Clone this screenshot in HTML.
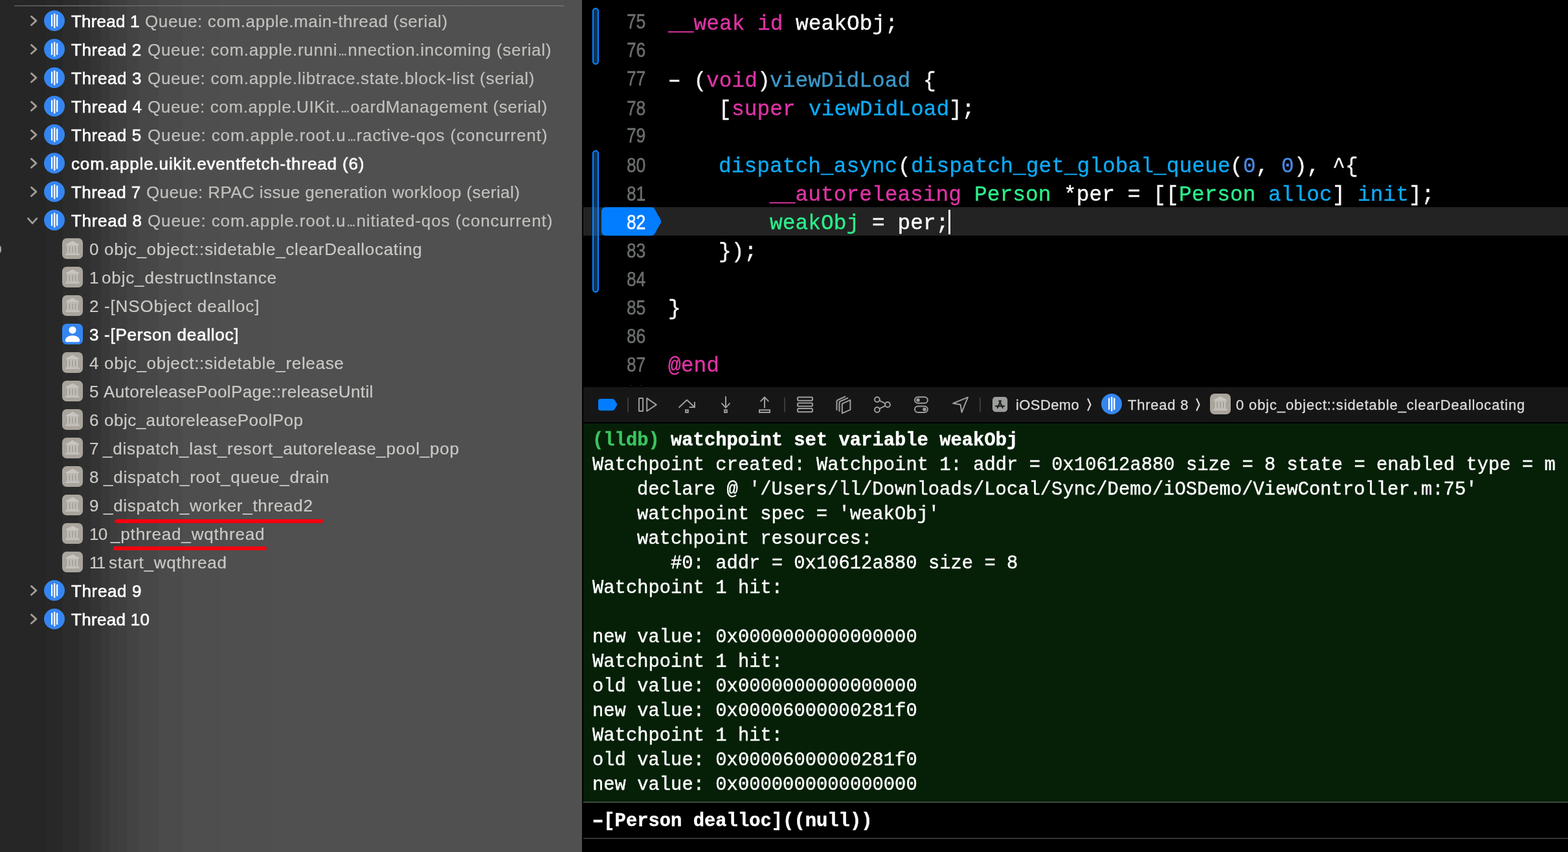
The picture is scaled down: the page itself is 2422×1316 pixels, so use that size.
<!DOCTYPE html>
<html lang="en">
<head>
<meta charset="utf-8">
<title>Xcode debug session</title>
<style>
html,body{margin:0;padding:0;background:#000;}
body{width:2422px;height:1316px;overflow:hidden;position:relative;font-family:"Liberation Sans",sans-serif;}
.left{position:absolute;left:0;top:0;width:899px;height:1316px;}
.topline{position:absolute;left:22px;top:8px;width:849px;height:2px;background:linear-gradient(90deg,#505050 0,#5e5e5e 12%,#696969 40%,#6b6b6b 100%);}
.ic{position:absolute;display:block;overflow:visible;}
.t{position:absolute;white-space:pre;line-height:60px;height:60px;transform-origin:0 50%;will-change:transform;font-family:"Liberation Sans",sans-serif;}
.m{font-family:"Liberation Mono",monospace;}
.el{display:inline-block;width:16px;letter-spacing:0;text-indent:3.5px;transform:scale(.5,.5);transform-origin:0 37px;-webkit-text-stroke:2px currentColor;}
.hy{display:inline-block;transform:scaleX(1.6);}
.red{position:absolute;height:6px;border-radius:3px;background:#f4000f;}
.editor{position:absolute;left:901px;top:0;width:1521px;height:598px;background:#000;}
.hl{position:absolute;left:901px;top:320px;width:1521px;height:44px;background:#232323;}
.pill{position:absolute;box-sizing:border-box;left:915px;width:10px;border:2px solid #0a84ff;border-radius:5px;background:#0a3562;}
.pillhl{position:absolute;left:917px;top:320px;width:6px;height:44px;background:#164b7e;}
.dbg{position:absolute;left:901px;top:598px;width:1521px;height:54px;background:#161616;}
.sep{position:absolute;top:613.5px;width:2px;height:23px;background:#3a3a3a;border-radius:1px;}
.con{position:absolute;left:901px;top:654px;width:1521px;height:584px;background:#062008;}
.conline{position:absolute;left:901px;top:1238px;width:1521px;height:2px;background:#3c4b3d;}
.botline{position:absolute;left:901px;top:1294px;width:1521px;height:2px;background:#343434;}
</style>
</head>
<body>
<section id="debug-navigator">
<div class="left" style="background:linear-gradient(90deg,#262626 0px,#262626 72px,#272827 72px,#272827 97px,#2b2c2b 97px,#2b2c2b 122px,#2f302f 122px,#2f302f 140px,#333433 140px,#333433 156px,#383938 156px,#383938 170px,#3c3d3c 170px,#3c3d3c 181px,#3f3f3f 181px,#3f3f3f 196px,#434343 196px,#434343 214px,#474747 214px,#474747 245px,#4b4b4b 245px,#4b4b4b 282px,#4e4e4e 282px,#4e4e4e 340px,#4f4f4f 340px,#4f4f4f 420px,#505050 420px)"></div>
<div class="topline"></div>
<svg class="ic" style="left:46.8px;top:23.6px" width="11" height="17" viewBox="0 0 11 17"><path d="M1.4 1.4 L8.9 8.1 L1.4 14.8" fill="none" stroke="#a39d96" stroke-width="2.8" stroke-linecap="round" stroke-linejoin="round"/></svg>
<svg class="ic" style="left:68px;top:16px" width="32" height="32" viewBox="0 0 32 32"><circle cx="16" cy="16" r="16" fill="#3585f1"/><rect x="11" y="6.5" width="2.2" height="18.6" rx="1" fill="#fff"/><rect x="15" y="4.8" width="2.4" height="22.6" rx="1" fill="#fff"/><rect x="19.1" y="6.5" width="2.2" height="18.6" rx="1" fill="#fff"/></svg>
<div class="t" style="left:110.00px;top:3px;font-size:26px;color:#ffffff;-webkit-text-stroke:0.6px #ffffff;letter-spacing:0.203px;">Thread 1</div>
<div class="t" style="left:223.50px;top:3px;font-size:26px;color:#c2c0bd;-webkit-text-stroke:0.2px #c2c0bd;letter-spacing:0.611px;">Queue: com.apple.main-thread (serial)</div>
<svg class="ic" style="left:46.8px;top:67.6px" width="11" height="17" viewBox="0 0 11 17"><path d="M1.4 1.4 L8.9 8.1 L1.4 14.8" fill="none" stroke="#a39d96" stroke-width="2.8" stroke-linecap="round" stroke-linejoin="round"/></svg>
<svg class="ic" style="left:68px;top:60px" width="32" height="32" viewBox="0 0 32 32"><circle cx="16" cy="16" r="16" fill="#3585f1"/><rect x="11" y="6.5" width="2.2" height="18.6" rx="1" fill="#fff"/><rect x="15" y="4.8" width="2.4" height="22.6" rx="1" fill="#fff"/><rect x="19.1" y="6.5" width="2.2" height="18.6" rx="1" fill="#fff"/></svg>
<div class="t" style="left:110.00px;top:47px;font-size:26px;color:#ffffff;-webkit-text-stroke:0.6px #ffffff;letter-spacing:0.578px;">Thread 2</div>
<div class="t" style="left:228.00px;top:47px;font-size:26px;color:#c2c0bd;-webkit-text-stroke:0.2px #c2c0bd;letter-spacing:0.717px;">Queue: com.apple.runni<span class="el">…</span>nnection.incoming (serial)</div>
<svg class="ic" style="left:46.8px;top:111.6px" width="11" height="17" viewBox="0 0 11 17"><path d="M1.4 1.4 L8.9 8.1 L1.4 14.8" fill="none" stroke="#a39d96" stroke-width="2.8" stroke-linecap="round" stroke-linejoin="round"/></svg>
<svg class="ic" style="left:68px;top:104px" width="32" height="32" viewBox="0 0 32 32"><circle cx="16" cy="16" r="16" fill="#3585f1"/><rect x="11" y="6.5" width="2.2" height="18.6" rx="1" fill="#fff"/><rect x="15" y="4.8" width="2.4" height="22.6" rx="1" fill="#fff"/><rect x="19.1" y="6.5" width="2.2" height="18.6" rx="1" fill="#fff"/></svg>
<div class="t" style="left:110.00px;top:91px;font-size:26px;color:#ffffff;-webkit-text-stroke:0.6px #ffffff;letter-spacing:0.640px;">Thread 3</div>
<div class="t" style="left:228.00px;top:91px;font-size:26px;color:#c2c0bd;-webkit-text-stroke:0.2px #c2c0bd;letter-spacing:0.707px;">Queue: com.apple.libtrace.state.block-list (serial)</div>
<svg class="ic" style="left:46.8px;top:155.6px" width="11" height="17" viewBox="0 0 11 17"><path d="M1.4 1.4 L8.9 8.1 L1.4 14.8" fill="none" stroke="#a39d96" stroke-width="2.8" stroke-linecap="round" stroke-linejoin="round"/></svg>
<svg class="ic" style="left:68px;top:148px" width="32" height="32" viewBox="0 0 32 32"><circle cx="16" cy="16" r="16" fill="#3585f1"/><rect x="11" y="6.5" width="2.2" height="18.6" rx="1" fill="#fff"/><rect x="15" y="4.8" width="2.4" height="22.6" rx="1" fill="#fff"/><rect x="19.1" y="6.5" width="2.2" height="18.6" rx="1" fill="#fff"/></svg>
<div class="t" style="left:110.00px;top:135px;font-size:26px;color:#ffffff;-webkit-text-stroke:0.6px #ffffff;letter-spacing:0.703px;">Thread 4</div>
<div class="t" style="left:228.00px;top:135px;font-size:26px;color:#c2c0bd;-webkit-text-stroke:0.2px #c2c0bd;letter-spacing:0.608px;">Queue: com.apple.UIKit.<span class="el">…</span>oardManagement (serial)</div>
<svg class="ic" style="left:46.8px;top:199.6px" width="11" height="17" viewBox="0 0 11 17"><path d="M1.4 1.4 L8.9 8.1 L1.4 14.8" fill="none" stroke="#a39d96" stroke-width="2.8" stroke-linecap="round" stroke-linejoin="round"/></svg>
<svg class="ic" style="left:68px;top:192px" width="32" height="32" viewBox="0 0 32 32"><circle cx="16" cy="16" r="16" fill="#3585f1"/><rect x="11" y="6.5" width="2.2" height="18.6" rx="1" fill="#fff"/><rect x="15" y="4.8" width="2.4" height="22.6" rx="1" fill="#fff"/><rect x="19.1" y="6.5" width="2.2" height="18.6" rx="1" fill="#fff"/></svg>
<div class="t" style="left:110.00px;top:179px;font-size:26px;color:#ffffff;-webkit-text-stroke:0.6px #ffffff;letter-spacing:0.578px;">Thread 5</div>
<div class="t" style="left:228.00px;top:179px;font-size:26px;color:#c2c0bd;-webkit-text-stroke:0.2px #c2c0bd;letter-spacing:0.883px;">Queue: com.apple.root.u<span class="el">…</span>ractive-qos (concurrent)</div>
<svg class="ic" style="left:46.8px;top:243.6px" width="11" height="17" viewBox="0 0 11 17"><path d="M1.4 1.4 L8.9 8.1 L1.4 14.8" fill="none" stroke="#a39d96" stroke-width="2.8" stroke-linecap="round" stroke-linejoin="round"/></svg>
<svg class="ic" style="left:68px;top:236px" width="32" height="32" viewBox="0 0 32 32"><circle cx="16" cy="16" r="16" fill="#3585f1"/><rect x="11" y="6.5" width="2.2" height="18.6" rx="1" fill="#fff"/><rect x="15" y="4.8" width="2.4" height="22.6" rx="1" fill="#fff"/><rect x="19.1" y="6.5" width="2.2" height="18.6" rx="1" fill="#fff"/></svg>
<div class="t" style="left:110.00px;top:223px;font-size:26px;color:#ffffff;-webkit-text-stroke:0.6px #ffffff;letter-spacing:0.843px;">com.apple.uikit.eventfetch-thread (6)</div>
<svg class="ic" style="left:46.8px;top:287.6px" width="11" height="17" viewBox="0 0 11 17"><path d="M1.4 1.4 L8.9 8.1 L1.4 14.8" fill="none" stroke="#a39d96" stroke-width="2.8" stroke-linecap="round" stroke-linejoin="round"/></svg>
<svg class="ic" style="left:68px;top:280px" width="32" height="32" viewBox="0 0 32 32"><circle cx="16" cy="16" r="16" fill="#3585f1"/><rect x="11" y="6.5" width="2.2" height="18.6" rx="1" fill="#fff"/><rect x="15" y="4.8" width="2.4" height="22.6" rx="1" fill="#fff"/><rect x="19.1" y="6.5" width="2.2" height="18.6" rx="1" fill="#fff"/></svg>
<div class="t" style="left:110.00px;top:267px;font-size:26px;color:#ffffff;-webkit-text-stroke:0.6px #ffffff;letter-spacing:0.453px;">Thread 7</div>
<div class="t" style="left:226.00px;top:267px;font-size:26px;color:#c2c0bd;-webkit-text-stroke:0.2px #c2c0bd;letter-spacing:0.400px;">Queue: RPAC issue generation workloop (serial)</div>
<svg class="ic" style="left:42px;top:336px" width="17" height="11" viewBox="0 0 17 11"><path d="M1.4 1.4 L8.1 8.9 L14.8 1.4" fill="none" stroke="#a39d96" stroke-width="2.8" stroke-linecap="round" stroke-linejoin="round"/></svg>
<svg class="ic" style="left:68px;top:324px" width="32" height="32" viewBox="0 0 32 32"><circle cx="16" cy="16" r="16" fill="#3585f1"/><rect x="11" y="6.5" width="2.2" height="18.6" rx="1" fill="#fff"/><rect x="15" y="4.8" width="2.4" height="22.6" rx="1" fill="#fff"/><rect x="19.1" y="6.5" width="2.2" height="18.6" rx="1" fill="#fff"/></svg>
<div class="t" style="left:110.00px;top:311px;font-size:26px;color:#ffffff;-webkit-text-stroke:0.6px #ffffff;letter-spacing:0.703px;">Thread 8</div>
<div class="t" style="left:228.00px;top:311px;font-size:26px;color:#c2c0bd;-webkit-text-stroke:0.2px #c2c0bd;letter-spacing:0.879px;">Queue: com.apple.root.u<span class="el">…</span>nitiated-qos (concurrent)</div>
<svg class="ic" style="left:96px;top:368px" width="32" height="32" viewBox="0 0 32 32"><rect width="32" height="32" rx="7" fill="#a9a49c"/><g fill="#c8c5c0"><path d="M16 4 L26 9.4 V11 H6 V9.4 Z"/><rect x="8" y="12" width="1.9" height="10.4"/><rect x="12.7" y="12" width="1.9" height="10.4"/><rect x="17.4" y="12" width="1.9" height="10.4"/><rect x="22.1" y="12" width="1.9" height="10.4"/><rect x="7" y="11.6" width="18" height="1"/><rect x="6.6" y="22.4" width="18.8" height="1.4"/><rect x="5" y="24.2" width="22" height="1.8" rx=".5"/></g></svg>
<div class="t" style="left:138.00px;top:355px;font-size:26px;color:#cbc9c6;-webkit-text-stroke:0.2px #cbc9c6;letter-spacing:1.331px;">0</div>
<div class="t" style="left:161.20px;top:355px;font-size:26px;color:#cbc9c6;-webkit-text-stroke:0.2px #cbc9c6;letter-spacing:0.688px;">objc_object::sidetable_clearDeallocating</div>
<svg class="ic" style="left:96px;top:412px" width="32" height="32" viewBox="0 0 32 32"><rect width="32" height="32" rx="7" fill="#a9a49c"/><g fill="#c8c5c0"><path d="M16 4 L26 9.4 V11 H6 V9.4 Z"/><rect x="8" y="12" width="1.9" height="10.4"/><rect x="12.7" y="12" width="1.9" height="10.4"/><rect x="17.4" y="12" width="1.9" height="10.4"/><rect x="22.1" y="12" width="1.9" height="10.4"/><rect x="7" y="11.6" width="18" height="1"/><rect x="6.6" y="22.4" width="18.8" height="1.4"/><rect x="5" y="24.2" width="22" height="1.8" rx=".5"/></g></svg>
<div class="t" style="left:138.00px;top:399px;font-size:26px;color:#cbc9c6;-webkit-text-stroke:0.2px #cbc9c6;letter-spacing:-0.669px;">1</div>
<div class="t" style="left:156.80px;top:399px;font-size:26px;color:#cbc9c6;-webkit-text-stroke:0.2px #cbc9c6;letter-spacing:0.855px;">objc_destructInstance</div>
<svg class="ic" style="left:96px;top:456px" width="32" height="32" viewBox="0 0 32 32"><rect width="32" height="32" rx="7" fill="#a9a49c"/><g fill="#c8c5c0"><path d="M16 4 L26 9.4 V11 H6 V9.4 Z"/><rect x="8" y="12" width="1.9" height="10.4"/><rect x="12.7" y="12" width="1.9" height="10.4"/><rect x="17.4" y="12" width="1.9" height="10.4"/><rect x="22.1" y="12" width="1.9" height="10.4"/><rect x="7" y="11.6" width="18" height="1"/><rect x="6.6" y="22.4" width="18.8" height="1.4"/><rect x="5" y="24.2" width="22" height="1.8" rx=".5"/></g></svg>
<div class="t" style="left:138.00px;top:443px;font-size:26px;color:#cbc9c6;-webkit-text-stroke:0.2px #cbc9c6;letter-spacing:1.131px;">2</div>
<div class="t" style="left:161.40px;top:443px;font-size:26px;color:#cbc9c6;-webkit-text-stroke:0.2px #cbc9c6;letter-spacing:0.859px;">-[NSObject dealloc]</div>
<svg class="ic" style="left:96px;top:500px" width="32" height="32" viewBox="0 0 32 32"><rect width="32" height="32" rx="7" fill="#3585f1"/><circle cx="16" cy="9.8" r="5.6" fill="#fff"/><path d="M4.8 26 C4.8 21 10 18.2 16 18.2 C22 18.2 27.2 21 27.2 26 C27.2 27.4 26.4 28.2 25 28.2 H7 C5.6 28.2 4.8 27.4 4.8 26 Z" fill="#fff"/></svg>
<div class="t" style="left:138.00px;top:487px;font-size:26px;color:#ffffff;-webkit-text-stroke:0.6px #ffffff;letter-spacing:1.931px;">3</div>
<div class="t" style="left:161.40px;top:487px;font-size:26px;color:#ffffff;-webkit-text-stroke:0.6px #ffffff;letter-spacing:0.776px;">-[Person dealloc]</div>
<svg class="ic" style="left:96px;top:544px" width="32" height="32" viewBox="0 0 32 32"><rect width="32" height="32" rx="7" fill="#a9a49c"/><g fill="#c8c5c0"><path d="M16 4 L26 9.4 V11 H6 V9.4 Z"/><rect x="8" y="12" width="1.9" height="10.4"/><rect x="12.7" y="12" width="1.9" height="10.4"/><rect x="17.4" y="12" width="1.9" height="10.4"/><rect x="22.1" y="12" width="1.9" height="10.4"/><rect x="7" y="11.6" width="18" height="1"/><rect x="6.6" y="22.4" width="18.8" height="1.4"/><rect x="5" y="24.2" width="22" height="1.8" rx=".5"/></g></svg>
<div class="t" style="left:138.00px;top:531px;font-size:26px;color:#cbc9c6;-webkit-text-stroke:0.2px #cbc9c6;letter-spacing:1.731px;">4</div>
<div class="t" style="left:161.20px;top:531px;font-size:26px;color:#cbc9c6;-webkit-text-stroke:0.2px #cbc9c6;letter-spacing:0.690px;">objc_object::sidetable_release</div>
<svg class="ic" style="left:96px;top:588px" width="32" height="32" viewBox="0 0 32 32"><rect width="32" height="32" rx="7" fill="#a9a49c"/><g fill="#c8c5c0"><path d="M16 4 L26 9.4 V11 H6 V9.4 Z"/><rect x="8" y="12" width="1.9" height="10.4"/><rect x="12.7" y="12" width="1.9" height="10.4"/><rect x="17.4" y="12" width="1.9" height="10.4"/><rect x="22.1" y="12" width="1.9" height="10.4"/><rect x="7" y="11.6" width="18" height="1"/><rect x="6.6" y="22.4" width="18.8" height="1.4"/><rect x="5" y="24.2" width="22" height="1.8" rx=".5"/></g></svg>
<div class="t" style="left:138.00px;top:575px;font-size:26px;color:#cbc9c6;-webkit-text-stroke:0.2px #cbc9c6;letter-spacing:1.331px;">5</div>
<div class="t" style="left:160.40px;top:575px;font-size:26px;color:#cbc9c6;-webkit-text-stroke:0.2px #cbc9c6;letter-spacing:0.410px;">AutoreleasePoolPage::releaseUntil</div>
<svg class="ic" style="left:96px;top:632px" width="32" height="32" viewBox="0 0 32 32"><rect width="32" height="32" rx="7" fill="#a9a49c"/><g fill="#c8c5c0"><path d="M16 4 L26 9.4 V11 H6 V9.4 Z"/><rect x="8" y="12" width="1.9" height="10.4"/><rect x="12.7" y="12" width="1.9" height="10.4"/><rect x="17.4" y="12" width="1.9" height="10.4"/><rect x="22.1" y="12" width="1.9" height="10.4"/><rect x="7" y="11.6" width="18" height="1"/><rect x="6.6" y="22.4" width="18.8" height="1.4"/><rect x="5" y="24.2" width="22" height="1.8" rx=".5"/></g></svg>
<div class="t" style="left:138.00px;top:619px;font-size:26px;color:#cbc9c6;-webkit-text-stroke:0.2px #cbc9c6;letter-spacing:1.531px;">6</div>
<div class="t" style="left:161.20px;top:619px;font-size:26px;color:#cbc9c6;-webkit-text-stroke:0.2px #cbc9c6;letter-spacing:0.485px;">objc_autoreleasePoolPop</div>
<svg class="ic" style="left:96px;top:676px" width="32" height="32" viewBox="0 0 32 32"><rect width="32" height="32" rx="7" fill="#a9a49c"/><g fill="#c8c5c0"><path d="M16 4 L26 9.4 V11 H6 V9.4 Z"/><rect x="8" y="12" width="1.9" height="10.4"/><rect x="12.7" y="12" width="1.9" height="10.4"/><rect x="17.4" y="12" width="1.9" height="10.4"/><rect x="22.1" y="12" width="1.9" height="10.4"/><rect x="7" y="11.6" width="18" height="1"/><rect x="6.6" y="22.4" width="18.8" height="1.4"/><rect x="5" y="24.2" width="22" height="1.8" rx=".5"/></g></svg>
<div class="t" style="left:138.00px;top:663px;font-size:26px;color:#cbc9c6;-webkit-text-stroke:0.2px #cbc9c6;letter-spacing:0.531px;">7</div>
<div class="t" style="left:158.60px;top:663px;font-size:26px;color:#cbc9c6;-webkit-text-stroke:0.2px #cbc9c6;letter-spacing:0.754px;">_dispatch_last_resort_autorelease_pool_pop</div>
<svg class="ic" style="left:96px;top:720px" width="32" height="32" viewBox="0 0 32 32"><rect width="32" height="32" rx="7" fill="#a9a49c"/><g fill="#c8c5c0"><path d="M16 4 L26 9.4 V11 H6 V9.4 Z"/><rect x="8" y="12" width="1.9" height="10.4"/><rect x="12.7" y="12" width="1.9" height="10.4"/><rect x="17.4" y="12" width="1.9" height="10.4"/><rect x="22.1" y="12" width="1.9" height="10.4"/><rect x="7" y="11.6" width="18" height="1"/><rect x="6.6" y="22.4" width="18.8" height="1.4"/><rect x="5" y="24.2" width="22" height="1.8" rx=".5"/></g></svg>
<div class="t" style="left:138.00px;top:707px;font-size:26px;color:#cbc9c6;-webkit-text-stroke:0.2px #cbc9c6;letter-spacing:1.531px;">8</div>
<div class="t" style="left:160.20px;top:707px;font-size:26px;color:#cbc9c6;-webkit-text-stroke:0.2px #cbc9c6;letter-spacing:0.746px;">_dispatch_root_queue_drain</div>
<svg class="ic" style="left:96px;top:764px" width="32" height="32" viewBox="0 0 32 32"><rect width="32" height="32" rx="7" fill="#a9a49c"/><g fill="#c8c5c0"><path d="M16 4 L26 9.4 V11 H6 V9.4 Z"/><rect x="8" y="12" width="1.9" height="10.4"/><rect x="12.7" y="12" width="1.9" height="10.4"/><rect x="17.4" y="12" width="1.9" height="10.4"/><rect x="22.1" y="12" width="1.9" height="10.4"/><rect x="7" y="11.6" width="18" height="1"/><rect x="6.6" y="22.4" width="18.8" height="1.4"/><rect x="5" y="24.2" width="22" height="1.8" rx=".5"/></g></svg>
<div class="t" style="left:138.00px;top:751px;font-size:26px;color:#cbc9c6;-webkit-text-stroke:0.2px #cbc9c6;letter-spacing:1.531px;">9</div>
<div class="t" style="left:159.60px;top:751px;font-size:26px;color:#cbc9c6;-webkit-text-stroke:0.2px #cbc9c6;letter-spacing:0.716px;">_dispatch_worker_thread2</div>
<svg class="ic" style="left:96px;top:808px" width="32" height="32" viewBox="0 0 32 32"><rect width="32" height="32" rx="7" fill="#a9a49c"/><g fill="#c8c5c0"><path d="M16 4 L26 9.4 V11 H6 V9.4 Z"/><rect x="8" y="12" width="1.9" height="10.4"/><rect x="12.7" y="12" width="1.9" height="10.4"/><rect x="17.4" y="12" width="1.9" height="10.4"/><rect x="22.1" y="12" width="1.9" height="10.4"/><rect x="7" y="11.6" width="18" height="1"/><rect x="6.6" y="22.4" width="18.8" height="1.4"/><rect x="5" y="24.2" width="22" height="1.8" rx=".5"/></g></svg>
<div class="t" style="left:138.00px;top:795px;font-size:26px;color:#cbc9c6;-webkit-text-stroke:0.2px #cbc9c6;letter-spacing:-0.661px;">10</div>
<div class="t" style="left:171.40px;top:795px;font-size:26px;color:#cbc9c6;-webkit-text-stroke:0.2px #cbc9c6;letter-spacing:0.837px;">_pthread_wqthread</div>
<svg class="ic" style="left:96px;top:852px" width="32" height="32" viewBox="0 0 32 32"><rect width="32" height="32" rx="7" fill="#a9a49c"/><g fill="#c8c5c0"><path d="M16 4 L26 9.4 V11 H6 V9.4 Z"/><rect x="8" y="12" width="1.9" height="10.4"/><rect x="12.7" y="12" width="1.9" height="10.4"/><rect x="17.4" y="12" width="1.9" height="10.4"/><rect x="22.1" y="12" width="1.9" height="10.4"/><rect x="7" y="11.6" width="18" height="1"/><rect x="6.6" y="22.4" width="18.8" height="1.4"/><rect x="5" y="24.2" width="22" height="1.8" rx=".5"/></g></svg>
<div class="t" style="left:138.00px;top:839px;font-size:26px;color:#cbc9c6;-webkit-text-stroke:0.2px #cbc9c6;letter-spacing:-1.900px;">11</div>
<div class="t" style="left:168.40px;top:839px;font-size:26px;color:#cbc9c6;-webkit-text-stroke:0.2px #cbc9c6;letter-spacing:0.773px;">start_wqthread</div>
<svg class="ic" style="left:46.8px;top:903.6px" width="11" height="17" viewBox="0 0 11 17"><path d="M1.4 1.4 L8.9 8.1 L1.4 14.8" fill="none" stroke="#a39d96" stroke-width="2.8" stroke-linecap="round" stroke-linejoin="round"/></svg>
<svg class="ic" style="left:68px;top:896px" width="32" height="32" viewBox="0 0 32 32"><circle cx="16" cy="16" r="16" fill="#3585f1"/><rect x="11" y="6.5" width="2.2" height="18.6" rx="1" fill="#fff"/><rect x="15" y="4.8" width="2.4" height="22.6" rx="1" fill="#fff"/><rect x="19.1" y="6.5" width="2.2" height="18.6" rx="1" fill="#fff"/></svg>
<div class="t" style="left:110.00px;top:883px;font-size:26px;color:#ffffff;-webkit-text-stroke:0.6px #ffffff;letter-spacing:0.640px;">Thread 9</div>
<svg class="ic" style="left:46.8px;top:947.6px" width="11" height="17" viewBox="0 0 11 17"><path d="M1.4 1.4 L8.9 8.1 L1.4 14.8" fill="none" stroke="#a39d96" stroke-width="2.8" stroke-linecap="round" stroke-linejoin="round"/></svg>
<svg class="ic" style="left:68px;top:940px" width="32" height="32" viewBox="0 0 32 32"><circle cx="16" cy="16" r="16" fill="#3585f1"/><rect x="11" y="6.5" width="2.2" height="18.6" rx="1" fill="#fff"/><rect x="15" y="4.8" width="2.4" height="22.6" rx="1" fill="#fff"/><rect x="19.1" y="6.5" width="2.2" height="18.6" rx="1" fill="#fff"/></svg>
<div class="t" style="left:110.00px;top:927px;font-size:26px;color:#ffffff;-webkit-text-stroke:0.6px #ffffff;letter-spacing:0.297px;">Thread 10</div>
<div class="red" style="left:176.5px;top:801.5px;width:322px"></div>
<div class="red" style="left:174.5px;top:844px;width:237px"></div>
<div style="position:absolute;left:-9px;top:378px;width:11px;height:13.5px;border-radius:7px;background:#a5a29a"></div>
</section>
<section id="source-editor">
<div class="editor"></div>
<div class="hl"></div>
<div class="pill" style="top:12px;height:88px"></div>
<div class="pill" style="top:232px;height:220px"></div>
<div class="pillhl"></div>
<svg class="ic" style="left:929px;top:320px" width="93" height="44" viewBox="0 0 93 44"><path d="M7 0 H77 Q80.5 0 82.3 3 L91.6 19.6 Q92.8 22 91.6 24.4 L82.3 41 Q80.5 44 77 44 H7 Q0 44 0 37 V7 Q0 0 7 0 Z" fill="#037dff"/></svg>
<div class="t m" style="left:1031.50px;top:8px;font-size:32.9px;color:#de34a4;-webkit-text-stroke:0.35px #de34a4;letter-spacing:0.000px;">__weak</div>
<div class="t m" style="left:1169.68px;top:8px;font-size:32.9px;color:#de34a4;-webkit-text-stroke:0.35px #de34a4;letter-spacing:-0.002px;">id</div>
<div class="t m" style="left:1228.90px;top:8px;font-size:32.9px;color:#ffffff;-webkit-text-stroke:0.35px #ffffff;letter-spacing:0.002px;">weakObj;</div>
<div class="t" style="left:967.80px;top:3px;font-size:32px;color:#6c706d;-webkit-text-stroke:0.6px #6c706d;transform:scaleX(0.8204);">75</div>
<div class="t" style="left:967.80px;top:47px;font-size:32px;color:#6c706d;-webkit-text-stroke:0.6px #6c706d;transform:scaleX(0.8204);">76</div>
<div class="t m" style="left:1031.50px;top:96px;font-size:32.9px;color:#ffffff;-webkit-text-stroke:0.35px #ffffff;letter-spacing:0.000px;"><span class="hy">-</span> (</div>
<div class="t m" style="left:1090.72px;top:96px;font-size:32.9px;color:#de34a4;-webkit-text-stroke:0.35px #de34a4;letter-spacing:0.002px;">void</div>
<div class="t m" style="left:1169.68px;top:96px;font-size:32.9px;color:#ffffff;-webkit-text-stroke:0.35px #ffffff;letter-spacing:-0.010px;">)</div>
<div class="t m" style="left:1189.42px;top:96px;font-size:32.9px;color:#3d97c6;-webkit-text-stroke:0.35px #3d97c6;letter-spacing:0.001px;">viewDidLoad</div>
<div class="t m" style="left:1426.30px;top:96px;font-size:32.9px;color:#ffffff;-webkit-text-stroke:0.35px #ffffff;letter-spacing:-0.010px;">{</div>
<div class="t" style="left:967.80px;top:91px;font-size:32px;color:#6c706d;-webkit-text-stroke:0.6px #6c706d;transform:scaleX(0.8204);">77</div>
<div class="t m" style="left:1110.46px;top:140px;font-size:32.9px;color:#ffffff;-webkit-text-stroke:0.35px #ffffff;letter-spacing:-0.010px;">[</div>
<div class="t m" style="left:1130.20px;top:140px;font-size:32.9px;color:#de34a4;-webkit-text-stroke:0.35px #de34a4;letter-spacing:-0.001px;">super</div>
<div class="t m" style="left:1248.64px;top:140px;font-size:32.9px;color:#0daaf6;-webkit-text-stroke:0.35px #0daaf6;letter-spacing:0.001px;">viewDidLoad</div>
<div class="t m" style="left:1465.78px;top:140px;font-size:32.9px;color:#ffffff;-webkit-text-stroke:0.35px #ffffff;letter-spacing:-0.002px;">];</div>
<div class="t" style="left:967.80px;top:137px;font-size:32px;color:#6c706d;-webkit-text-stroke:0.6px #6c706d;transform:scaleX(0.8204);">78</div>
<div class="t" style="left:967.80px;top:179px;font-size:32px;color:#6c706d;-webkit-text-stroke:0.6px #6c706d;transform:scaleX(0.8204);">79</div>
<div class="t m" style="left:1110.46px;top:228px;font-size:32.9px;color:#0daaf6;-webkit-text-stroke:0.35px #0daaf6;letter-spacing:0.002px;">dispatch_async</div>
<div class="t m" style="left:1386.82px;top:228px;font-size:32.9px;color:#ffffff;-webkit-text-stroke:0.35px #ffffff;letter-spacing:-0.010px;">(</div>
<div class="t m" style="left:1406.56px;top:228px;font-size:32.9px;color:#0daaf6;-webkit-text-stroke:0.35px #0daaf6;letter-spacing:0.002px;">dispatch_get_global_queue</div>
<div class="t m" style="left:1900.06px;top:228px;font-size:32.9px;color:#ffffff;-webkit-text-stroke:0.35px #ffffff;letter-spacing:-0.010px;">(</div>
<div class="t m" style="left:1919.80px;top:228px;font-size:32.9px;color:#4a88e4;-webkit-text-stroke:0.35px #4a88e4;letter-spacing:-0.010px;">0</div>
<div class="t m" style="left:1939.54px;top:228px;font-size:32.9px;color:#ffffff;-webkit-text-stroke:0.35px #ffffff;letter-spacing:-0.002px;">, </div>
<div class="t m" style="left:1979.02px;top:228px;font-size:32.9px;color:#4a88e4;-webkit-text-stroke:0.35px #4a88e4;letter-spacing:-0.010px;">0</div>
<div class="t m" style="left:1998.76px;top:228px;font-size:32.9px;color:#ffffff;-webkit-text-stroke:0.35px #ffffff;letter-spacing:-0.001px;">), ^{</div>
<div class="t" style="left:967.80px;top:225px;font-size:32px;color:#6c706d;-webkit-text-stroke:0.6px #6c706d;transform:scaleX(0.8204);">80</div>
<div class="t m" style="left:1189.42px;top:272px;font-size:32.9px;color:#de34a4;-webkit-text-stroke:0.35px #de34a4;letter-spacing:0.001px;">__autoreleasing</div>
<div class="t m" style="left:1505.26px;top:272px;font-size:32.9px;color:#2bef8a;-webkit-text-stroke:0.35px #2bef8a;letter-spacing:0.000px;">Person</div>
<div class="t m" style="left:1643.44px;top:272px;font-size:32.9px;color:#ffffff;-webkit-text-stroke:0.35px #ffffff;letter-spacing:0.002px;">*per = [[</div>
<div class="t m" style="left:1821.10px;top:272px;font-size:32.9px;color:#2bef8a;-webkit-text-stroke:0.35px #2bef8a;letter-spacing:0.000px;">Person</div>
<div class="t m" style="left:1959.28px;top:272px;font-size:32.9px;color:#0daaf6;-webkit-text-stroke:0.35px #0daaf6;letter-spacing:-0.001px;">alloc</div>
<div class="t m" style="left:2057.98px;top:272px;font-size:32.9px;color:#ffffff;-webkit-text-stroke:0.35px #ffffff;letter-spacing:-0.010px;">]</div>
<div class="t m" style="left:2097.46px;top:272px;font-size:32.9px;color:#0daaf6;-webkit-text-stroke:0.35px #0daaf6;letter-spacing:0.002px;">init</div>
<div class="t m" style="left:2176.42px;top:272px;font-size:32.9px;color:#ffffff;-webkit-text-stroke:0.35px #ffffff;letter-spacing:-0.002px;">];</div>
<div class="t" style="left:967.80px;top:269px;font-size:32px;color:#6c706d;-webkit-text-stroke:0.6px #6c706d;transform:scaleX(0.8204);">81</div>
<div class="t m" style="left:1189.42px;top:316px;font-size:32.9px;color:#2bef8a;-webkit-text-stroke:0.35px #2bef8a;letter-spacing:0.001px;">weakObj</div>
<div class="t m" style="left:1347.34px;top:316px;font-size:32.9px;color:#ffffff;-webkit-text-stroke:0.35px #ffffff;letter-spacing:0.000px;">= per;</div>
<div class="t" style="left:967.80px;top:313px;font-size:32px;color:#fff;-webkit-text-stroke:0.6px #fff;transform:scaleX(0.8204);">82</div>
<div class="t m" style="left:1110.46px;top:360px;font-size:32.9px;color:#ffffff;-webkit-text-stroke:0.35px #ffffff;letter-spacing:0.000px;">});</div>
<div class="t" style="left:967.80px;top:357px;font-size:32px;color:#6c706d;-webkit-text-stroke:0.6px #6c706d;transform:scaleX(0.8204);">83</div>
<div class="t" style="left:967.80px;top:401px;font-size:32px;color:#6c706d;-webkit-text-stroke:0.6px #6c706d;transform:scaleX(0.8204);">84</div>
<div class="t m" style="left:1031.50px;top:448px;font-size:32.9px;color:#ffffff;-webkit-text-stroke:0.35px #ffffff;letter-spacing:-0.010px;">}</div>
<div class="t" style="left:967.80px;top:445px;font-size:32px;color:#6c706d;-webkit-text-stroke:0.6px #6c706d;transform:scaleX(0.8204);">85</div>
<div class="t" style="left:967.80px;top:489px;font-size:32px;color:#6c706d;-webkit-text-stroke:0.6px #6c706d;transform:scaleX(0.8204);">86</div>
<div class="t m" style="left:1031.50px;top:536px;font-size:32.9px;color:#de34a4;-webkit-text-stroke:0.35px #de34a4;letter-spacing:0.002px;">@end</div>
<div class="t" style="left:967.80px;top:533px;font-size:32px;color:#6c706d;-webkit-text-stroke:0.6px #6c706d;transform:scaleX(0.8204);">87</div>
<div style="position:absolute;left:1465px;top:323.5px;width:3.2px;height:38px;background:#fff"></div>
<div style="position:absolute;left:973px;top:595px;width:3px;height:1.4px;background:#1f1f1f"></div><div style="position:absolute;left:989px;top:595px;width:3px;height:1.4px;background:#1f1f1f"></div>
</section>
<section id="debug-bar">
<div class="dbg"></div>
<svg class="ic" style="left:924px;top:616px" width="30" height="19" viewBox="0 0 30 19"><path d="M3.6 0 H22 Q24 0 25.2 1.8 L28.8 7.6 Q29.6 9.1 28.8 10.6 L25.2 16.4 Q24 18.2 22 18.2 H3.6 Q0 18.2 0 14.6 V3.6 Q0 0 3.6 0 Z" fill="#037dff"/></svg>
<div class="sep" style="left:969px"></div>
<div class="sep" style="left:1211px"></div>
<div class="sep" style="left:1513px"></div>
<svg class="ic" style="left:985px;top:612px" width="32" height="26" viewBox="0 0 32 26" fill="none" stroke="#9b9e9b" stroke-width="2" stroke-linecap="round" stroke-linejoin="round"><rect x="2" y="3.1" width="6.1" height="20" rx=".6"/><path d="M14.2 3.2 L28.8 13.1 L14.2 23 Z"/></svg>
<svg class="ic" style="left:1046px;top:612px" width="30" height="28" viewBox="0 0 30 28" fill="none" stroke="#9b9e9b" stroke-width="2" stroke-linecap="round" stroke-linejoin="round"><path d="M3.2 17 L15 5.8 L26.9 17"/><path d="M27 9.6 V17.1 H19.4"/><rect x="13.1" y="21.3" width="3.7" height="3.7" stroke-linejoin="miter"/></svg>
<svg class="ic" style="left:1110px;top:610px" width="22" height="30" viewBox="0 0 22 30" fill="none" stroke="#9b9e9b" stroke-width="2" stroke-linecap="round" stroke-linejoin="round"><path d="M11 3 V19.4"/><path d="M5 13.2 L11 19.8 L17 13.2"/><rect x="9.1" y="23.3" width="3.7" height="3.7" stroke-linejoin="miter"/></svg>
<svg class="ic" style="left:1170px;top:610px" width="22" height="30" viewBox="0 0 22 30" fill="none" stroke="#9b9e9b" stroke-width="2" stroke-linecap="round" stroke-linejoin="round"><path d="M11 19.6 V4"/><path d="M5.2 9.6 L11 3.5 L16.8 9.6"/><rect x="3" y="23.3" width="16.1" height="3.7" stroke-linejoin="miter"/></svg>
<svg class="ic" style="left:1230px;top:612px" width="27" height="26" viewBox="0 0 27 26" fill="none" stroke="#9b9e9b" stroke-width="2" stroke-linecap="round" stroke-linejoin="round"><rect x="2" y="1.6" width="23" height="5.1" rx="1.8"/><rect x="2" y="10.4" width="23" height="5.1" rx="1.8"/><rect x="2" y="19.1" width="23" height="5.1" rx="1.8"/></svg>
<svg class="ic" style="left:1290px;top:610px" width="26" height="30" viewBox="0 0 26 30" fill="none" stroke="#9b9e9b" stroke-width="2" stroke-linecap="round" stroke-linejoin="round"><path d="M10.8 13.6 L23.4 7.8 V22.8 L10.8 28.4 Z"/><path d="M6.5 25 V12 Q6.5 10.6 7.8 10 L19.3 4.8"/><path d="M2.5 23 V10 Q2.5 8.6 3.8 8 L15.4 2.6"/></svg>
<svg class="ic" style="left:1348px;top:610px" width="30" height="30" viewBox="0 0 30 30" fill="none" stroke="#9b9e9b" stroke-width="2" stroke-linecap="round" stroke-linejoin="round"><circle cx="6.9" cy="7.1" r="3.9"/><circle cx="23" cy="15" r="3.9"/><circle cx="6.9" cy="23" r="3.9"/><path d="M10.6 8.9 L19.4 13.2 M19.4 16.8 L10.6 21.2"/></svg>
<svg class="ic" style="left:1410px;top:610px" width="26" height="30" viewBox="0 0 26 30" fill="none" stroke="#9b9e9b" stroke-width="2" stroke-linecap="round" stroke-linejoin="round"><rect x="3" y="3.2" width="19.9" height="9.5" rx="4.75"/><rect x="3" y="17.6" width="19.9" height="9.4" rx="4.7"/><circle cx="8" cy="8" r="2.8" fill="#9b9e9b" stroke="none"/><circle cx="18" cy="22.2" r="2.8" fill="#9b9e9b" stroke="none"/></svg>
<svg class="ic" style="left:1469px;top:609.6px" width="30" height="30" viewBox="0 0 30 30" fill="none" stroke="#9b9e9b" stroke-width="2" stroke-linecap="round" stroke-linejoin="round"><path d="M26 3.6 L3.2 13 L14.6 15.1 L16.5 26.8 Z"/></svg>
<svg class="ic" style="left:1533px;top:612.8px" width="23.2" height="23.2" viewBox="0 0 24 24"><rect width="24" height="24" rx="5" fill="#9b9e9b"/><g stroke="#1e1e1e" stroke-width="2.2" stroke-linecap="round" fill="none"><path d="M8 17.4 L13.4 6.2"/><path d="M10.8 6.2 L16.4 17.4"/><path d="M5.2 14.8 H18.8"/></g></svg>
<div class="t" style="left:1569.00px;top:596px;font-size:22px;color:#dcdcdc;-webkit-text-stroke:0.3px #dcdcdc;letter-spacing:0.406px;">iOSDemo</div>
<svg class="ic" style="left:1679.3px;top:615.4px" width="8" height="20" viewBox="0 0 8 20"><path d="M1.5 1.3 L5.5 10 L1.5 18.7" fill="none" stroke="#d8d8d8" stroke-width="2.2" stroke-linecap="round" stroke-linejoin="round"/></svg>
<svg class="ic" style="left:1701px;top:608px" width="32" height="32" viewBox="0 0 32 32"><circle cx="16" cy="16" r="16" fill="#3585f1"/><rect x="11" y="6.5" width="2.2" height="18.6" rx="1" fill="#fff"/><rect x="15" y="4.8" width="2.4" height="22.6" rx="1" fill="#fff"/><rect x="19.1" y="6.5" width="2.2" height="18.6" rx="1" fill="#fff"/></svg>
<div class="t" style="left:1742.00px;top:596px;font-size:22px;color:#dcdcdc;-webkit-text-stroke:0.3px #dcdcdc;letter-spacing:0.767px;">Thread 8</div>
<svg class="ic" style="left:1847.4px;top:615.4px" width="8" height="20" viewBox="0 0 8 20"><path d="M1.5 1.3 L5.5 10 L1.5 18.7" fill="none" stroke="#d8d8d8" stroke-width="2.2" stroke-linecap="round" stroke-linejoin="round"/></svg>
<svg class="ic" style="left:1869px;top:608px" width="32" height="32" viewBox="0 0 32 32"><rect width="32" height="32" rx="7" fill="#a9a49c"/><g fill="#c8c5c0"><path d="M16 4 L26 9.4 V11 H6 V9.4 Z"/><rect x="8" y="12" width="1.9" height="10.4"/><rect x="12.7" y="12" width="1.9" height="10.4"/><rect x="17.4" y="12" width="1.9" height="10.4"/><rect x="22.1" y="12" width="1.9" height="10.4"/><rect x="7" y="11.6" width="18" height="1"/><rect x="6.6" y="22.4" width="18.8" height="1.4"/><rect x="5" y="24.2" width="22" height="1.8" rx=".5"/></g></svg>
<div class="t" style="left:1908.50px;top:596px;font-size:22px;color:#dcdcdc;-webkit-text-stroke:0.3px #dcdcdc;letter-spacing:0.863px;">0 objc_object::sidetable_clearDeallocating</div>
</section>
<section id="console">
<div class="con"></div>
<div class="conline"></div>
<div class="botline"></div>
<div class="t m" style="left:914.60px;top:651px;font-size:28.8px;color:#3cc45f;font-weight:700;-webkit-text-stroke:0.4px #3cc45f;letter-spacing:0.019px;">(lldb)</div>
<div class="t m" style="left:1035.70px;top:651px;font-size:28.8px;color:#fff;font-weight:700;-webkit-text-stroke:0.4px #fff;letter-spacing:0.019px;">watchpoint set variable weakObj</div>
<div class="t m" style="left:914.60px;top:689px;font-size:28.8px;color:#ffffff;-webkit-text-stroke:0.4px #ffffff;letter-spacing:0.019px;">Watchpoint created: Watchpoint 1: addr = 0x10612a880 size = 8 state = enabled type = m</div>
<div class="t m" style="left:983.80px;top:727px;font-size:28.8px;color:#ffffff;-webkit-text-stroke:0.4px #ffffff;letter-spacing:0.019px;">declare @ '/Users/ll/Downloads/Local/Sync/Demo/iOSDemo/ViewController.m:75'</div>
<div class="t m" style="left:983.80px;top:765px;font-size:28.8px;color:#ffffff;-webkit-text-stroke:0.4px #ffffff;letter-spacing:0.019px;">watchpoint spec = 'weakObj'</div>
<div class="t m" style="left:983.80px;top:803px;font-size:28.8px;color:#ffffff;-webkit-text-stroke:0.4px #ffffff;letter-spacing:0.019px;">watchpoint resources:</div>
<div class="t m" style="left:1035.70px;top:841px;font-size:28.8px;color:#ffffff;-webkit-text-stroke:0.4px #ffffff;letter-spacing:0.019px;">#0: addr = 0x10612a880 size = 8</div>
<div class="t m" style="left:914.60px;top:879px;font-size:28.8px;color:#ffffff;-webkit-text-stroke:0.4px #ffffff;letter-spacing:0.019px;">Watchpoint 1 hit:</div>
<div class="t m" style="left:914.60px;top:955px;font-size:28.8px;color:#ffffff;-webkit-text-stroke:0.4px #ffffff;letter-spacing:0.019px;">new value: 0x0000000000000000</div>
<div class="t m" style="left:914.60px;top:993px;font-size:28.8px;color:#ffffff;-webkit-text-stroke:0.4px #ffffff;letter-spacing:0.019px;">Watchpoint 1 hit:</div>
<div class="t m" style="left:914.60px;top:1031px;font-size:28.8px;color:#ffffff;-webkit-text-stroke:0.4px #ffffff;letter-spacing:0.019px;">old value: 0x0000000000000000</div>
<div class="t m" style="left:914.60px;top:1069px;font-size:28.8px;color:#ffffff;-webkit-text-stroke:0.4px #ffffff;letter-spacing:0.019px;">new value: 0x00006000000281f0</div>
<div class="t m" style="left:914.60px;top:1107px;font-size:28.8px;color:#ffffff;-webkit-text-stroke:0.4px #ffffff;letter-spacing:0.019px;">Watchpoint 1 hit:</div>
<div class="t m" style="left:914.60px;top:1145px;font-size:28.8px;color:#ffffff;-webkit-text-stroke:0.4px #ffffff;letter-spacing:0.019px;">old value: 0x00006000000281f0</div>
<div class="t m" style="left:914.60px;top:1183px;font-size:28.8px;color:#ffffff;-webkit-text-stroke:0.4px #ffffff;letter-spacing:0.019px;">new value: 0x0000000000000000</div>
<div class="t m" style="left:914.60px;top:1239px;font-size:28.8px;color:#fff;font-weight:700;-webkit-text-stroke:0.4px #fff;letter-spacing:0.019px;"><span class="hy">-</span>[Person dealloc]((null))</div>
</section>
</body>
</html>
